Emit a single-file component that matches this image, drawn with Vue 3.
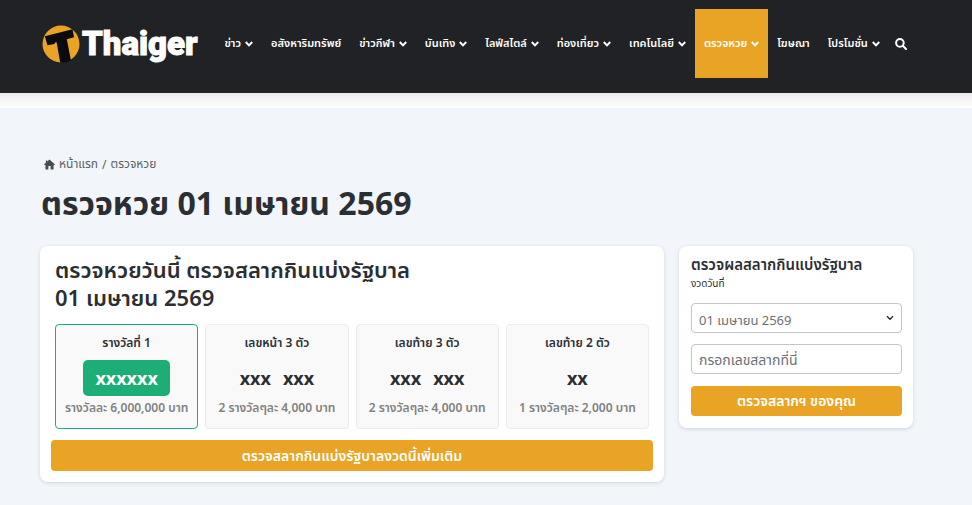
<script setup>
import { ref } from 'vue'

const navItems = [
  { label: 'ข่าว', menu: true },
  { label: 'อสังหาริมทรัพย์', menu: false },
  { label: 'ข่าวกีฬา', menu: true },
  { label: 'บันเทิง', menu: true },
  { label: 'ไลฟ์สไตล์', menu: true },
  { label: 'ท่องเที่ยว', menu: true },
  { label: 'เทคโนโลยี', menu: true },
  { label: 'ตรวจหวย', menu: true, active: true },
  { label: 'โฆษณา', menu: false },
  { label: 'โปรโมชั่น', menu: true }
]

const prizes = [
  { title: 'รางวัลที่ 1', numbers: ['xxxxxx'], amount: 'รางวัลละ 6,000,000 บาท', first: true },
  { title: 'เลขหน้า 3 ตัว', numbers: ['xxx', 'xxx'], amount: '2 รางวัลๆละ 4,000 บาท' },
  { title: 'เลขท้าย 3 ตัว', numbers: ['xxx', 'xxx'], amount: '2 รางวัลๆละ 4,000 บาท' },
  { title: 'เลขท้าย 2 ตัว', numbers: ['xx'], amount: '1 รางวัลๆละ 2,000 บาท' }
]

const drawDate = ref('01 เมษายน 2569')
const ticket = ref('')
</script>

<template>
  <div class="page">
    <header class="header">
      <a class="logo" href="#">
        <svg class="logo-mark" viewBox="0 0 38 38" aria-hidden="true">
          <circle cx="19" cy="19" r="18.5" fill="#e9a426" />
          <path d="M2.800 11.300 30.500 4.200 32 12.300 24.800 14.300 29 35.800C25.500 37.500 21.500 38 18.200 37.500L14.600 17.200 13 17.600 12.500 19 5.500 20.300z" fill="#0b0b0c" />
        </svg>
        <span class="logo-name">Thaiger</span>
      </a>
      <nav class="nav">
        <a v-for="item in navItems" :key="item.label" href="#" class="nav-link" :class="{ active: item.active }">
          {{ item.label }}
          <svg v-if="item.menu" class="chevron" viewBox="0 0 8 6" aria-hidden="true">
            <path d="M.8 1 4 4.400 7.200 1" />
          </svg>
        </a>
        <button class="search" type="button" aria-label="ค้นหา">
          <svg viewBox="0 0 12 12" aria-hidden="true">
            <circle cx="4.900" cy="4.900" r="3.800" />
            <path d="M7.800 7.800 11 11" />
          </svg>
        </button>
      </nav>
    </header>

    <main class="main">
      <div class="breadcrumb">
        <svg class="home" viewBox="0 0 12 11" aria-hidden="true">
          <path d="M6 0 12 5.600 11.200 6.400 10.400 5.700V11H7.200V7.200H4.800V11H1.600V5.700L.8 6.400 0 5.600 2 3.700V1H3.500V2.300z" />
        </svg>
        <a href="#">หน้าแรก</a> <span>/</span> <span>ตรวจหวย</span>
      </div>
      <h1>ตรวจหวย 01 เมษายน 2569</h1>

      <div class="columns">
        <section class="card results">
          <h2>ตรวจหวยวันนี้ ตรวจสลากกินแบ่งรัฐบาล<br />01 เมษายน 2569</h2>
          <div class="prizes">
            <article v-for="prize in prizes" :key="prize.title" class="prize" :class="{ first: prize.first }">
              <h3>{{ prize.title }}</h3>
              <div class="numbers">
                <span v-for="(number, i) in prize.numbers" :key="i">{{ number }}</span>
              </div>
              <p>{{ prize.amount }}</p>
            </article>
          </div>
          <a class="button more" href="#">ตรวจสลากกินแบ่งรัฐบาลงวดนี้เพิ่มเติม</a>
        </section>

        <form class="card checker" @submit.prevent>
          <h2>ตรวจผลสลากกินแบ่งรัฐบาล</h2>
          <label for="draw-date">งวดวันที่</label>
          <div class="select-wrap">
            <select id="draw-date" v-model="drawDate">
              <option>01 เมษายน 2569</option>
            </select>
            <svg class="select-arrow" viewBox="0 0 8 6" aria-hidden="true">
              <path d="M1 1.200 4 4.300 7 1.200" />
            </svg>
          </div>
          <input v-model="ticket" type="text" placeholder="กรอกเลขสลากที่นี่" aria-label="กรอกเลขสลากที่นี่" />
          <button class="button" type="submit">ตรวจสลากฯ ของคุณ</button>
        </form>
      </div>
    </main>
  </div>
</template>

<style>
body {
  background: #f2f6fa;
}
</style>

<style scoped>
.page {
  font-family: "Noto Sans", "Noto Sans Thai", sans-serif;
  color: #2b2e33;
}

a {
  color: inherit;
  text-decoration: none;
}

h1, h2, h3, p {
  margin: 0;
}

.header {
  display: flex;
  align-items: center;
  box-sizing: border-box;
  height: 93px;
  padding: 0 60px 6px 42px;
  background: #202225;
  color: #fff;
}

.logo {
  display: flex;
  align-items: center;
  flex: none;
  gap: 2px;
}

.logo-mark {
  width: 38px;
  height: 38px;
}

.logo-name {
  font-family: Roboto, sans-serif;
  font-weight: 900;
  font-size: 33px;
  line-height: 38px;
  -webkit-text-stroke: 1px #fff;
}

.nav {
  display: flex;
  align-items: center;
  flex: 1;
  margin-left: 18px;
}

.nav-link {
  display: flex;
  align-items: center;
  gap: 4px;
  height: 69px;
  padding: 0 9px;
  font-size: 11px;
  font-weight: 600;
  white-space: nowrap;
}

.nav-link.active {
  background: #e9a426;
}

.chevron {
  width: 8px;
  height: 6px;
  fill: none;
  stroke: currentColor;
  stroke-width: 2;
}

.search {
  width: 12px;
  height: 12px;
  margin-left: 6px;
  padding: 0;
  border: 0;
  background: none;
  color: #fff;
}

.search svg {
  display: block;
  fill: none;
  stroke: currentColor;
  stroke-width: 2;
  stroke-linecap: round;
}

.main {
  padding: 0 59px 22px 40px;
}

.main::before {
  content: "";
  display: block;
  height: 15px;
  margin: 0 -59px 46px -40px;
  background: linear-gradient(#ebebeb, #fff);
}

.breadcrumb {
  display: flex;
  align-items: center;
  gap: 4px;
  height: 20px;
  padding-left: 4px;
  color: #5c5f63;
  font-size: 12px;
}

.home {
  width: 11px;
  height: 11px;
  fill: #4a4d50;
}

h1 {
  padding: 5px 0 0 1px;
  font-size: 32px;
  font-weight: 700;
  line-height: 48px;
}

.columns {
  display: grid;
  grid-template-columns: 624fr 234fr;
  align-items: start;
  gap: 15px;
  margin-top: 19px;
}

.card {
  box-sizing: border-box;
  border-radius: 8px;
  background: #fff;
  box-shadow: 0 1px 4px rgba(30, 50, 70, 0.16);
}

.results {
  padding: 9px 11px 11px;
}

.results h2 {
  padding: 0 4px;
  font-size: 22px;
  font-weight: 600;
  line-height: 28px;
}

.prizes {
  display: grid;
  grid-template-columns: repeat(4, 1fr);
  gap: 7px;
  padding: 13px 4px 11px;
}

.prize {
  display: flex;
  flex-direction: column;
  align-items: center;
  box-sizing: border-box;
  height: 105px;
  padding-top: 9px;
  border: 1px solid #ececec;
  border-radius: 4px;
  background: #f9f9f9;
  white-space: nowrap;
}

.prize.first {
  border-color: #1dae78;
}

.prize h3 {
  font-size: 12px;
  font-weight: 600;
  line-height: 18px;
}

.numbers {
  display: flex;
  gap: 12px;
  margin-top: 8px;
  padding: 0 12px;
  border-radius: 5px;
  font-size: 18px;
  font-weight: 700;
  line-height: 36px;
}

.first .numbers {
  background: #1dae78;
  color: #fff;
}

.prize p {
  margin-top: 3px;
  color: #818181;
  font-size: 12px;
  font-weight: 600;
  line-height: 18px;
}

.button {
  display: block;
  width: 100%;
  height: 30px;
  padding: 0;
  border: 0;
  border-radius: 4px;
  background: #e9a426;
  color: #fff;
  font: inherit;
  font-size: 14px;
  font-weight: 600;
  line-height: 30px;
  text-align: center;
}

.more {
  height: 31px;
  line-height: 32px;
}

.checker {
  display: flex;
  flex-direction: column;
  padding: 7px 11px 12px 12px;
}

.checker h2 {
  font-size: 15px;
  font-weight: 600;
  line-height: 22px;
  white-space: nowrap;
}

.checker label {
  font-size: 10px;
  line-height: 16px;
}

.select-wrap {
  position: relative;
  margin: 12px 0 11px;
}

select,
input {
  display: block;
  box-sizing: border-box;
  width: 100%;
  height: 30px;
  padding: 0 7px;
  border: 1px solid #c4c7ca;
  border-radius: 4px;
  background: #fff;
  color: #6c7075;
  font: inherit;
  font-size: 14px;
  appearance: none;
}

select {
  padding-top: 3px;
  font-size: 13px;
}

input {
  margin-bottom: 12px;
}

input::placeholder {
  color: #6c7075;
}

.select-arrow {
  position: absolute;
  top: 12px;
  right: 8px;
  width: 8px;
  height: 6px;
  fill: none;
  stroke: #222;
  stroke-width: 1.300;
  pointer-events: none;
}
</style>
